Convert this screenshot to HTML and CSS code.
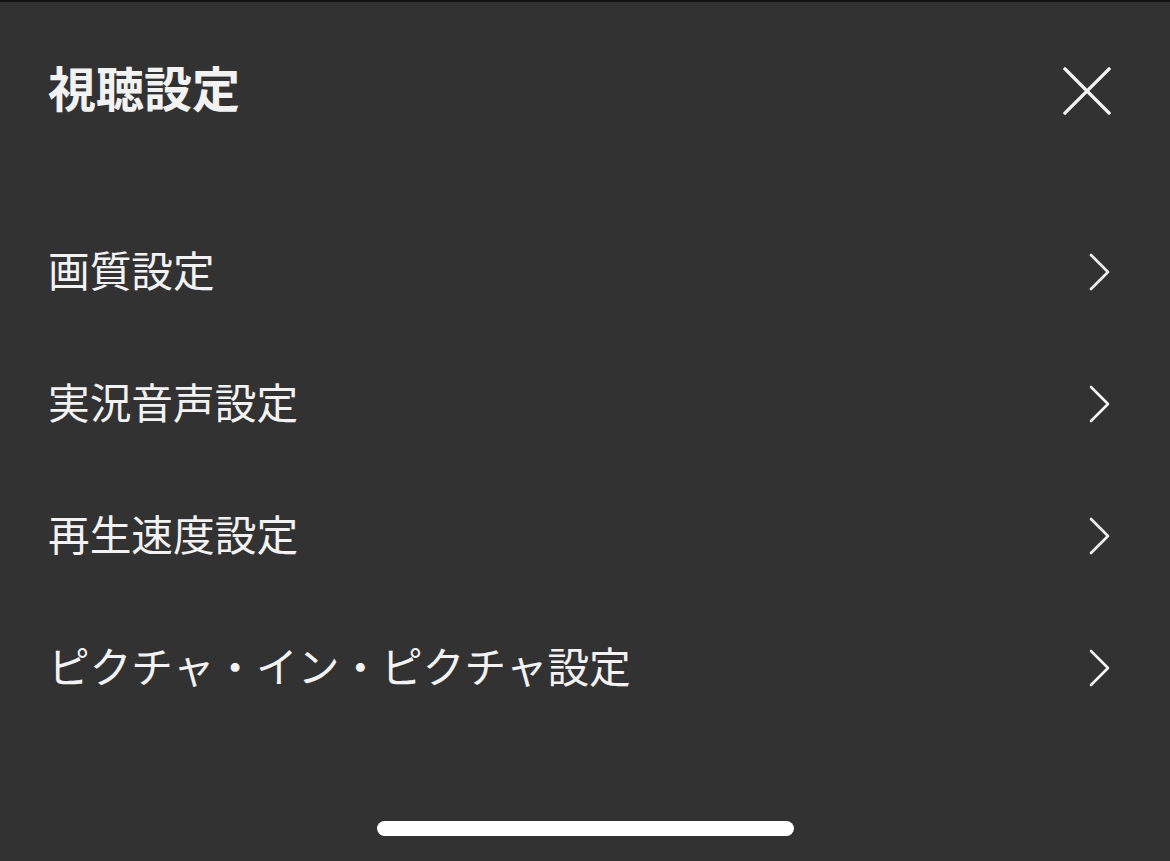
FILE: index.html
```html
<!DOCTYPE html>
<html lang="ja">
<head>
<meta charset="utf-8">
<title>視聴設定</title>
<link rel="stylesheet" href="styles.css">
</head>
<body>
<div class="sheet">
  <header class="header">
    <h1 class="title">視聴設定</h1>
    <button class="close" aria-label="閉じる">
      <svg width="48" height="48" viewBox="0 0 48 48"><path d="M2 2 L46 46 M46 2 L2 46" stroke="#f4f4f4" stroke-width="3.2" stroke-linecap="square" fill="none"/></svg>
    </button>
  </header>
  <ul class="menu">
    <li class="item"><span class="label">画質設定</span><svg class="chev" width="24" height="40" viewBox="0 0 24 40"><path d="M3 3 L20 20 L3 37" stroke="#f4f4f4" stroke-width="2.6" stroke-linecap="round" stroke-linejoin="round" fill="none"/></svg></li>
    <li class="item"><span class="label">実況音声設定</span><svg class="chev" width="24" height="40" viewBox="0 0 24 40"><path d="M3 3 L20 20 L3 37" stroke="#f4f4f4" stroke-width="2.6" stroke-linecap="round" stroke-linejoin="round" fill="none"/></svg></li>
    <li class="item"><span class="label">再生速度設定</span><svg class="chev" width="24" height="40" viewBox="0 0 24 40"><path d="M3 3 L20 20 L3 37" stroke="#f4f4f4" stroke-width="2.6" stroke-linecap="round" stroke-linejoin="round" fill="none"/></svg></li>
    <li class="item"><span class="label">ピクチャ・イン・ピクチャ設定</span><svg class="chev" width="24" height="40" viewBox="0 0 24 40"><path d="M3 3 L20 20 L3 37" stroke="#f4f4f4" stroke-width="2.6" stroke-linecap="round" stroke-linejoin="round" fill="none"/></svg></li>
  </ul>
  <div class="home-bar"></div>
</div>
</body>
</html>
```
FILE: styles.css
```css
* { box-sizing: border-box; }
html, body { margin: 0; padding: 0; }
body {
  background: #323232;
  font-family: "Noto Sans CJK JP", "Noto Sans", sans-serif;
  color: #f2f2f2;
}
.sheet {
  height: 861px;
  border-top: 2px solid #121212;
  display: flex;
  flex-direction: column;
}
.header {
  height: 178px;
  display: flex;
  align-items: center;
  justify-content: space-between;
  padding: 0 59px 0 48px;
}
.title {
  margin: 0 0 10px 0;
  font-size: 48px;
  font-weight: 700;
  letter-spacing: 0;
}
.close {
  background: none;
  border: 0;
  padding: 0;
  width: 48px;
  height: 48px;
  display: flex;
}
.menu {
  list-style: none;
  margin: 26px 0 0 0;
  padding: 0;
}
.item {
  height: 132px;
  display: flex;
  align-items: center;
  justify-content: space-between;
  padding: 0 58px 0 48px;
}
.label {
  font-size: 41.7px;
  font-weight: 400;
  margin-bottom: 6px;
}
.chev { display: block; }
.home-bar {
  margin: auto auto 25px auto;
  width: 417px;
  height: 15px;
  border-radius: 8px;
  background: #ffffff;
}
```
